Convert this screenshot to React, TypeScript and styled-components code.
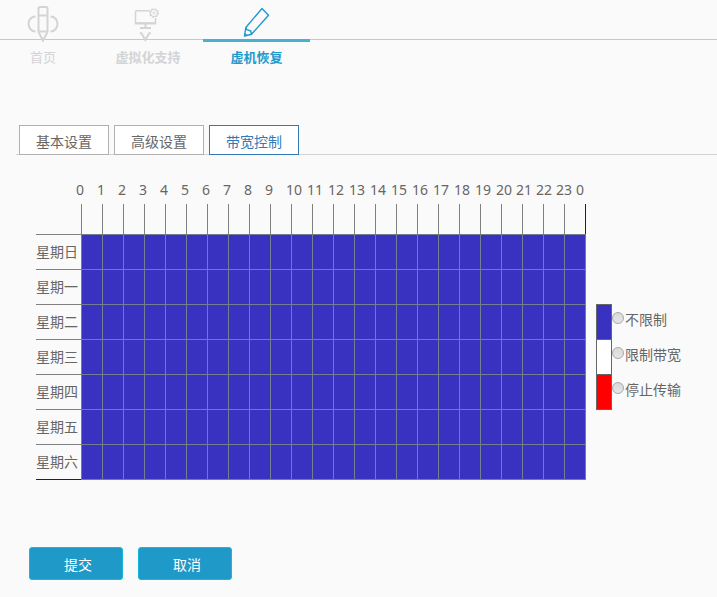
import React, { useState } from "react";
import styled, { createGlobalStyle } from "styled-components";

const GlobalStyle = createGlobalStyle`
  *, *::before, *::after { box-sizing: border-box; }
  body {
    margin: 0;
    background: #fafafa;
    color: #666;
    font-family: "Noto Sans", "Noto Sans CJK SC", sans-serif;
    font-size: 14px;
    line-height: 20px;
  }
  button, input { font: inherit; margin: 0; }
`;

const Nav = styled.nav`
  display: flex;
  height: 72px;
  background: linear-gradient(#c6c8c9, #c6c8c9) 0 39px / 100% 1px no-repeat;
`;

const NavItem = styled.a<{ $width: number; $active?: boolean; $bold?: boolean }>`
  display: flex;
  flex-direction: column;
  align-items: center;
  width: ${(p) => p.$width}px;
  color: ${(p) => (p.$active ? "#1e9acb" : "#d2d4d6")};
  font-size: 13px;
  font-weight: ${(p) => (p.$bold ? 700 : 400)};
  text-decoration: none;
  &:first-child { margin-right: 7px; }
`;

const NavIcon = styled.svg`
  display: block;
  height: 39px;
  width: 40px;
  flex: none;
  overflow: visible;
  fill: none;
  stroke: currentColor;
`;

const NavLabel = styled.span<{ $active?: boolean }>`
  width: 100%;
  padding-top: 5px;
  border-top: 3px solid ${(p) => (p.$active ? "#4baed3" : "transparent")};
  text-align: center;
`;

const Tabs = styled.div`
  display: flex;
  gap: 5px;
  margin: 53px 0 0 16px;
  padding-left: 3px;
  background: linear-gradient(#d3d3d3, #d3d3d3) 0 100% / 100% 1px no-repeat;
`;

const Tab = styled.button<{ $active: boolean }>`
  width: 90px;
  height: 30px;
  padding: 3px 0 0;
  border: 1px solid ${(p) => (p.$active ? "#337ab7" : "#b3b0b0")};
  background: #fff;
  color: ${(p) => (p.$active ? "#337ab7" : "#666")};
`;

const Panel = styled.div`
  display: flex;
  margin: 25px 16px 0 36px;
`;

const Hours = styled.div`
  display: flex;
  height: 24px;
  padding-left: 40px;
`;

const Hour = styled.span<{ $late: boolean }>`
  flex: none;
  width: ${(p) => (p.$late ? 20 : 21)}px;
  white-space: nowrap;
  &:last-child { width: 8px; }
`;

const Schedule = styled.table`
  border-collapse: separate;
  border-spacing: 0;
  table-layout: fixed;
  width: 550px;
`;

const Corner = styled.th`
  width: 45px;
  padding: 0;
`;

const Tick = styled.th`
  height: 30px;
  padding: 0;
  border-left: 1px solid #808080;
  &:last-child {
    width: 22px;
    border-right: 1px solid #222;
  }
`;

const Day = styled.th`
  height: 35px;
  padding: 0;
  border-top: 1px solid #808080;
  font-weight: 400;
  text-align: left;
  white-space: nowrap;
  tr:last-child > & {
    height: 36px;
    border-bottom: 1px solid #222;
  }
`;

const Slot = styled.td`
  padding: 0;
  border-top: 1px solid #708090;
  border-left: 1px solid #708090;
  background: #3932c1;
  &:last-child { border-right: 1px solid #708090; }
  tr:last-child > & { border-bottom: 1px solid #708090; }
`;

const Legend = styled.div`
  align-self: flex-end;
  margin: 0 0 71px 10px;
`;

const LegendRow = styled.label`
  display: flex;
  height: 35px;
  white-space: nowrap;
`;

const Swatch = styled.span<{ $color: string }>`
  width: 16px;
  height: 36px;
  border: 1px solid #666;
  background: ${(p) => p.$color};
`;

const Radio = styled.input`
  appearance: none;
  width: 12px;
  height: 12px;
  margin: 8px 1px 0 0;
  border: 1px solid #a8a8a8;
  border-radius: 50%;
  background: linear-gradient(#d9d9d9, #e6e6e6);
  &:checked { background: radial-gradient(#444 0 3px, #e2e2e2 4px); }
`;

const LegendText = styled.span`
  padding-top: 6px;
`;

const Actions = styled.div`
  display: flex;
  gap: 15px;
  margin: 67px 0 0 29px;
`;

const Action = styled.button`
  width: 94px;
  height: 33px;
  padding: 2px 0 0 4px;
  border: 1px solid #15b8dc;
  border-radius: 3px;
  background: #1e99c8;
  color: #fff;
`;

const HomeIcon = () => (
  <NavIcon viewBox="0 0 40 39" strokeWidth="2" aria-hidden="true">
    <path d="M15.5 32V8.500q0-1.500 1.500-1.500h6q1.500 0 1.500 1.500V32M15.500 15.500h9M15.500 31.500h9M15.500 32l4.500 8.500 4.500-8.500" />
    <path d="M12.500 16.500c-4 0-7 3-7 7.300s3 7.700 7 7.700M27.500 16.500c4 0 7 3 7 7.300s-3 7.700-7 7.700" />
  </NavIcon>
);

const MonitorIcon = () => (
  <NavIcon viewBox="0 0 40 39" aria-hidden="true">
    <path d="M21.500 10.700H8.500q-1 0-1 1V23h20v-5" strokeWidth="1.500" />
    <path d="M7 23.500h21" strokeWidth="2" />
    <path d="M17.500 24v3.500M12 28h11" strokeWidth="1.900" />
    <circle cx="26" cy="13" r="3.500" strokeWidth="1.200" />
    <circle cx="26" cy="13" r="4.300" strokeWidth="1.200" strokeDasharray="1.700 1.677" />
    <circle cx="26" cy="13" r="1.200" strokeWidth="0.800" />
    <path d="M11.800 33.200h1.700l3.800 6.800 3.800-6.800h1.700" strokeWidth="1.900" />
  </NavIcon>
);

const PencilIcon = () => (
  <NavIcon viewBox="0 0 40 39" strokeWidth="1.400" strokeLinejoin="round" aria-hidden="true">
    <path d="M25 8.500l6.500 6.800L14.500 34.300l-7 1.700L8.800 27.500z" />
    <path d="M8.800 27.500l1 2.200 4 1.300.7 3.300M7.800 33.500l2 2" />
  </NavIcon>
);

const tabs = ["基本设置", "高级设置", "带宽控制"];
const days = ["日", "一", "二", "三", "四", "五", "六"];
const hours = Array.from({ length: 24 }, (_, i) => i);
const modes = [
  { label: "不限制", color: "#3932c1" },
  { label: "限制带宽", color: "#fff" },
  { label: "停止传输", color: "#f00" },
];

export default function App() {
  const [tab, setTab] = useState(2);
  return (
    <>
      <GlobalStyle />
      <Nav>
        <NavItem href="#home" $width={86}>
          <HomeIcon />
          <NavLabel>首页</NavLabel>
        </NavItem>
        <NavItem href="#support" $width={110} $bold>
          <MonitorIcon />
          <NavLabel>虚拟化支持</NavLabel>
        </NavItem>
        <NavItem href="#restore" $width={107} $bold $active>
          <PencilIcon />
          <NavLabel $active>虚机恢复</NavLabel>
        </NavItem>
      </Nav>
      <main>
        <Tabs role="tablist">
          {tabs.map((name, i) => (
            <Tab key={name} type="button" role="tab" aria-selected={tab === i} $active={tab === i} onClick={() => setTab(i)}>
              {name}
            </Tab>
          ))}
        </Tabs>
        <Panel>
          <div>
            <Hours>
              {[...hours, 0].map((h, i) => (
                <Hour key={i} $late={i >= 20}>{h}</Hour>
              ))}
            </Hours>
            <Schedule>
              <thead>
                <tr>
                  <Corner />
                  {hours.map((h) => <Tick key={h} />)}
                </tr>
              </thead>
              <tbody>
                {days.map((d) => (
                  <tr key={d}>
                    <Day scope="row">星期{d}</Day>
                    {hours.map((h) => <Slot key={h} />)}
                  </tr>
                ))}
              </tbody>
            </Schedule>
          </div>
          <Legend>
            {modes.map((m) => (
              <LegendRow key={m.label}>
                <Swatch $color={m.color} />
                <Radio type="radio" name="mode" />
                <LegendText>{m.label}</LegendText>
              </LegendRow>
            ))}
          </Legend>
        </Panel>
        <Actions>
          <Action type="submit">提交</Action>
          <Action type="button">取消</Action>
        </Actions>
      </main>
    </>
  );
}
